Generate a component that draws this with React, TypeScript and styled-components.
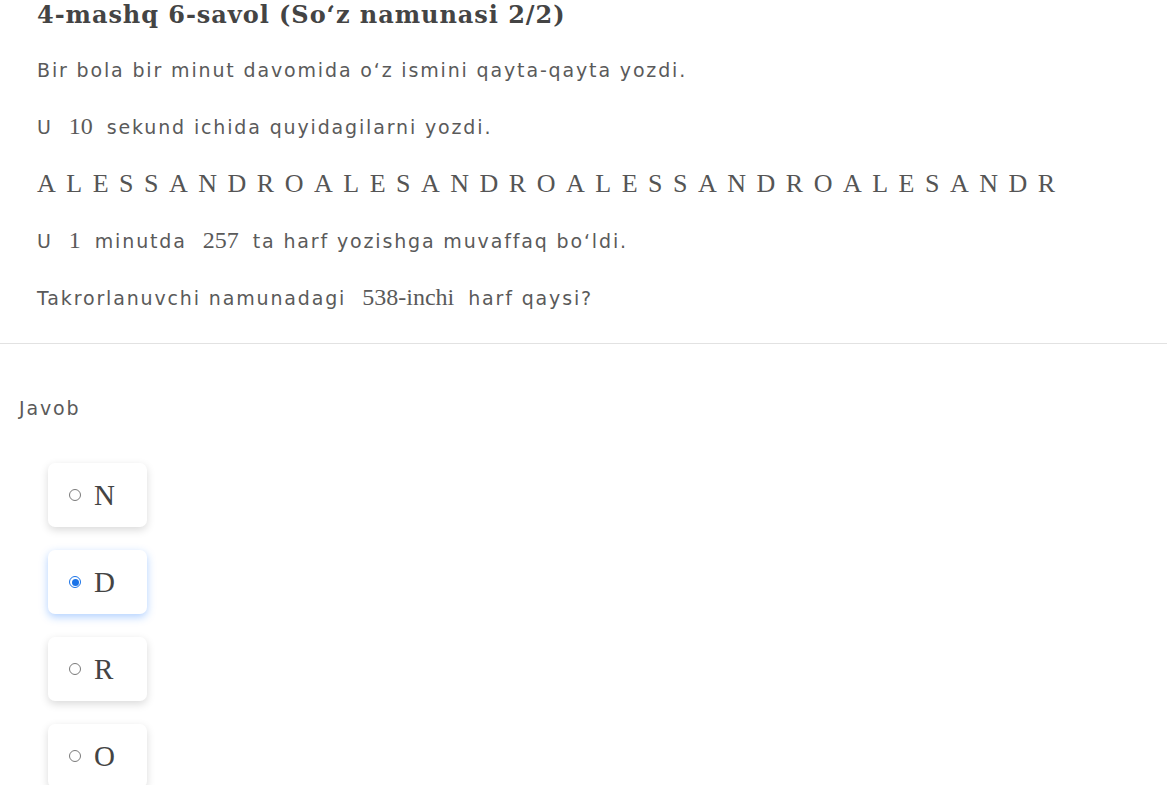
import React from "react";
import styled, { createGlobalStyle } from "styled-components";

const Global = createGlobalStyle`
  html, body { margin: 0; padding: 0; background: #fff; }
  body { font-family: "DejaVu Sans", "Open Sans", sans-serif; color: #555; }
`;

const Page = styled.div`
  display: flex;
  flex-direction: column;
`;

const Question = styled.section`
  padding: 0 37px 30px 37px;
  border-bottom: 1px solid #e2e2e2;
`;

const Title = styled.h2`
  margin: 0;
  font-family: "DejaVu Serif", "Liberation Serif", serif;
  font-weight: bold;
  font-size: 24px;
  letter-spacing: 0.95px;
  line-height: 30px;
  color: #444;
`;

const Para = styled.p<{ $first?: boolean }>`
  margin: 0;
  margin-top: ${(p) => (p.$first ? "25px" : "27px")};
  font-size: 19px;
  letter-spacing: 1.85px;
  line-height: 30px;
  color: #5a5a5a;
  white-space: nowrap;
`;

const M = styled.span`
  font-family: "Liberation Serif", "DejaVu Serif", serif;
  font-size: 24px;
  line-height: 1;
  letter-spacing: 0;
  margin: 0 14px 0 16px;
`;

const Letters = styled.div`
  margin-top: 27px;
  font-family: "Liberation Serif", serif;
  font-size: 26px;
  line-height: 30px;
  color: #555;
  white-space: nowrap;
`;

const Letter = styled.span`
  margin-right: 10.5px;
`;

const Answer = styled.section`
  padding: 49px 19px 0 19px;
`;

const Label = styled.div`
  font-size: 19px;
  letter-spacing: 1.85px;
  line-height: 30px;
  color: #5a5a5a;
`;

const Options = styled.div`
  display: flex;
  flex-direction: column;
  gap: 23px;
  padding: 40px 0 0 29px;
`;

const Card = styled.label<{ $selected?: boolean }>`
  box-sizing: border-box;
  width: 99px;
  height: 64px;
  display: flex;
  align-items: center;
  gap: 13px;
  padding-left: 21px;
  background: #fff;
  border-radius: 7px;
  box-shadow: ${(p) =>
    p.$selected
      ? "0 3px 9px rgba(30,120,255,0.35)"
      : "0 3px 9px rgba(0,0,0,0.15)"};
  cursor: pointer;
`;

const Radio = styled.span<{ $checked?: boolean }>`
  box-sizing: border-box;
  flex: none;
  width: 12px;
  height: 12px;
  border-radius: 50%;
  border: 1.3px solid ${(p) => (p.$checked ? "#1a73e8" : "#7a7a7a")};
  display: flex;
  align-items: center;
  justify-content: center;
  &::after {
    content: "";
    display: ${(p) => (p.$checked ? "block" : "none")};
    width: 7px;
    height: 7px;
    border-radius: 50%;
    background: #1a73e8;
  }
`;

const OptText = styled.span`
  font-family: "Liberation Serif", serif;
  font-size: 29px;
  line-height: 30px;
  color: #444;
`;

const seq = "ALESSANDROALESANDROALESSANDROALESANDR".split("");
const options = ["N", "D", "R", "O"];

export default function App() {
  return (
    <Page>
      <Global />
      <Question>
        <Title>4-mashq 6-savol (So‘z namunasi 2/2)</Title>
        <Para $first>Bir bola bir minut davomida o‘z ismini qayta-qayta yozdi.</Para>
        <Para>
          U<M>10</M>sekund ichida quyidagilarni yozdi.
        </Para>
        <Letters>
          {seq.map((l, i) => (
            <Letter key={i}>{l}</Letter>
          ))}
        </Letters>
        <Para>
          U<M>1</M>minutda<M>257</M>ta harf yozishga muvaffaq bo‘ldi.
        </Para>
        <Para>
          Takrorlanuvchi namunadagi<M>538-inchi</M>harf qaysi?
        </Para>
      </Question>
      <Answer>
        <Label>Javob</Label>
        <Options>
          {options.map((o) => (
            <Card key={o} $selected={o === "D"}>
              <Radio $checked={o === "D"} />
              <OptText>{o}</OptText>
            </Card>
          ))}
        </Options>
      </Answer>
    </Page>
  );
}
